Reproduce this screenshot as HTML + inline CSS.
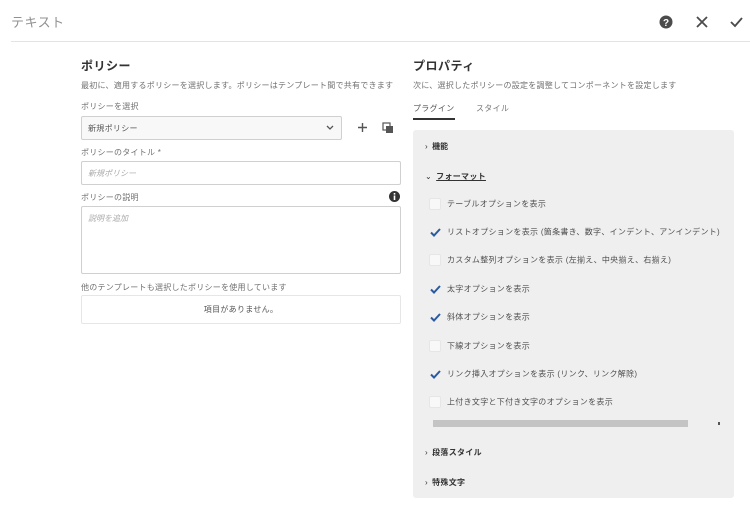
<!DOCTYPE html>
<html><head><meta charset="utf-8"><style>
*{margin:0;padding:0;box-sizing:border-box}
body{width:750px;height:522px;background:#fff;font-family:"Liberation Sans","Noto Sans CJK JP",sans-serif;color:#4b4b4b;position:relative;overflow:hidden}
.a{position:absolute;white-space:nowrap}
.s{font-size:8px;color:#707070;letter-spacing:0.25px}
.box{position:absolute;border:1px solid #d0d0d0;background:#fff;border-radius:2px}
.cb{position:absolute;left:429px;width:12px;height:12px;background:#f8f8f8;border:1px solid #e6e6e6;border-radius:2px}
.lbl{position:absolute;left:447px;font-size:8px;color:#505050;white-space:nowrap;transform:translateY(-50%);letter-spacing:0.3px}
.ck{position:absolute;left:429px;width:13px;height:13px}
</style></head><body>
<div class="a" style="left:11px;top:12px;font-size:13px;color:#909090;letter-spacing:0.5px">テキスト</div>
<svg class="a" style="left:659px;top:15px" width="14" height="14"><circle cx="7" cy="7" r="6.5" fill="#4b4b4b"/><text x="7" y="11" font-size="10" font-weight="bold" fill="#fff" text-anchor="middle" font-family="Liberation Sans">?</text></svg>
<svg class="a" style="left:696px;top:16px" width="12" height="12"><path d="M1 1L11 11M11 1L1 11" stroke="#4b4b4b" stroke-width="1.8"/></svg>
<svg class="a" style="left:730px;top:16px" width="13" height="12"><path d="M1 6L5 10L12 2" stroke="#4b4b4b" stroke-width="1.8" fill="none"/></svg>
<div class="a" style="left:11px;top:41px;width:739px;height:1px;background:#e4e4e4"></div>

<div class="a" style="left:81px;top:57px;font-size:12px;font-weight:bold;color:#333;letter-spacing:0.5px">ポリシー</div>
<div class="a s" style="left:81px;top:80px">最初に、適用するポリシーを選択します。ポリシーはテンプレート間で共有できます</div>
<div class="a s" style="left:81px;top:101px">ポリシーを選択</div>
<div class="box" style="left:81px;top:116px;width:261px;height:24px;background:#f8f8f8"></div>
<div class="a" style="left:88px;top:123px;font-size:8px;color:#555;letter-spacing:0.3px">新規ポリシー</div>
<svg class="a" style="left:326px;top:125px" width="8" height="6"><path d="M1 1L4 4L7 1" stroke="#555" stroke-width="1.3" fill="none"/></svg>
<svg class="a" style="left:357px;top:122px" width="11" height="11"><path d="M5.5 1V10M1 5.5H10" stroke="#555" stroke-width="1.4"/></svg>
<svg class="a" style="left:382px;top:122px" width="12" height="12"><rect x="1" y="1" width="7" height="7" fill="none" stroke="#555" stroke-width="1.2"/><rect x="4" y="4" width="7" height="7" fill="#555"/></svg>
<div class="a s" style="left:81px;top:147px">ポリシーのタイトル *</div>
<div class="box" style="left:81px;top:161px;width:320px;height:24px"></div>
<div class="a" style="left:88px;top:168px;font-size:8px;color:#aaa;font-style:italic">新規ポリシー</div>
<div class="a s" style="left:81px;top:192px">ポリシーの説明</div>
<svg class="a" style="left:389px;top:191px" width="11" height="11"><circle cx="5.5" cy="5.5" r="5.5" fill="#333"/><rect x="4.7" y="4.5" width="1.6" height="4.5" fill="#fff"/><rect x="4.7" y="2" width="1.6" height="1.6" fill="#fff"/></svg>
<div class="box" style="left:81px;top:206px;width:320px;height:68px"></div>
<div class="a" style="left:88px;top:213px;font-size:8px;color:#aaa;font-style:italic">説明を追加</div>
<div class="a s" style="left:81px;top:282px">他のテンプレートも選択したポリシーを使用しています</div>
<div class="box" style="left:81px;top:295px;width:320px;height:29px;border-color:#e6e6e6"></div>
<div class="a" style="left:81px;top:304px;width:320px;text-align:center;font-size:8px;color:#555;letter-spacing:0.3px">項目がありません。</div>

<div class="a" style="left:413px;top:57px;font-size:12px;font-weight:bold;color:#333;letter-spacing:0.5px">プロパティ</div>
<div class="a s" style="left:413px;top:80px">次に、選択したポリシーの設定を調整してコンポーネントを設定します</div>
<div class="a" style="left:413px;top:103px;font-size:8px;color:#555;letter-spacing:0.3px">プラグイン</div>
<div class="a" style="left:476px;top:103px;font-size:8px;color:#777;letter-spacing:0.3px">スタイル</div>
<div class="a" style="left:413px;top:118px;width:42px;height:2px;background:#333"></div>

<div class="a" style="left:413px;top:130px;width:321px;height:368px;background:#efefef;border-radius:3px"></div>
<div class="a" style="left:425px;top:141px;font-size:8px;color:#333">›&nbsp; <b>機能</b></div>
<div class="a" style="left:425px;top:171px;font-size:8px;color:#333">⌄&nbsp; <b style="text-decoration:underline;letter-spacing:0.3px">フォーマット</b></div>

<div class="cb" style="top:198px"></div><div class="lbl" style="top:204px">テーブルオプションを表示</div>
<svg class="ck" style="top:226px" viewBox="0 0 13 13"><path d="M2 6.5L5 9.5L11 3" stroke="#2c5aa0" stroke-width="2" fill="none"/></svg><div class="lbl" style="top:232px">リストオプションを表示 (箇条書き、数字、インデント、アンインデント)</div>
<div class="cb" style="top:254px"></div><div class="lbl" style="top:260px">カスタム整列オプションを表示 (左揃え、中央揃え、右揃え)</div>
<svg class="ck" style="top:283px" viewBox="0 0 13 13"><path d="M2 6.5L5 9.5L11 3" stroke="#2c5aa0" stroke-width="2" fill="none"/></svg><div class="lbl" style="top:289px">太字オプションを表示</div>
<svg class="ck" style="top:311px" viewBox="0 0 13 13"><path d="M2 6.5L5 9.5L11 3" stroke="#2c5aa0" stroke-width="2" fill="none"/></svg><div class="lbl" style="top:317px">斜体オプションを表示</div>
<div class="cb" style="top:340px"></div><div class="lbl" style="top:346px">下線オプションを表示</div>
<svg class="ck" style="top:368px" viewBox="0 0 13 13"><path d="M2 6.5L5 9.5L11 3" stroke="#2c5aa0" stroke-width="2" fill="none"/></svg><div class="lbl" style="top:374px">リンク挿入オプションを表示 (リンク、リンク解除)</div>
<div class="cb" style="top:396px"></div><div class="lbl" style="top:402px">上付き文字と下付き文字のオプションを表示</div>
<div class="a" style="left:433px;top:420px;width:255px;height:7px;background:#c4c4c4"></div>
<div class="a" style="left:718px;top:422px;width:2px;height:3px;background:#555"></div>
<div class="a" style="left:425px;top:447px;font-size:8px;color:#333">›&nbsp; <b style="letter-spacing:0.3px">段落スタイル</b></div>
<div class="a" style="left:425px;top:477px;font-size:8px;color:#333">›&nbsp; <b style="letter-spacing:0.3px">特殊文字</b></div>
</body></html>
